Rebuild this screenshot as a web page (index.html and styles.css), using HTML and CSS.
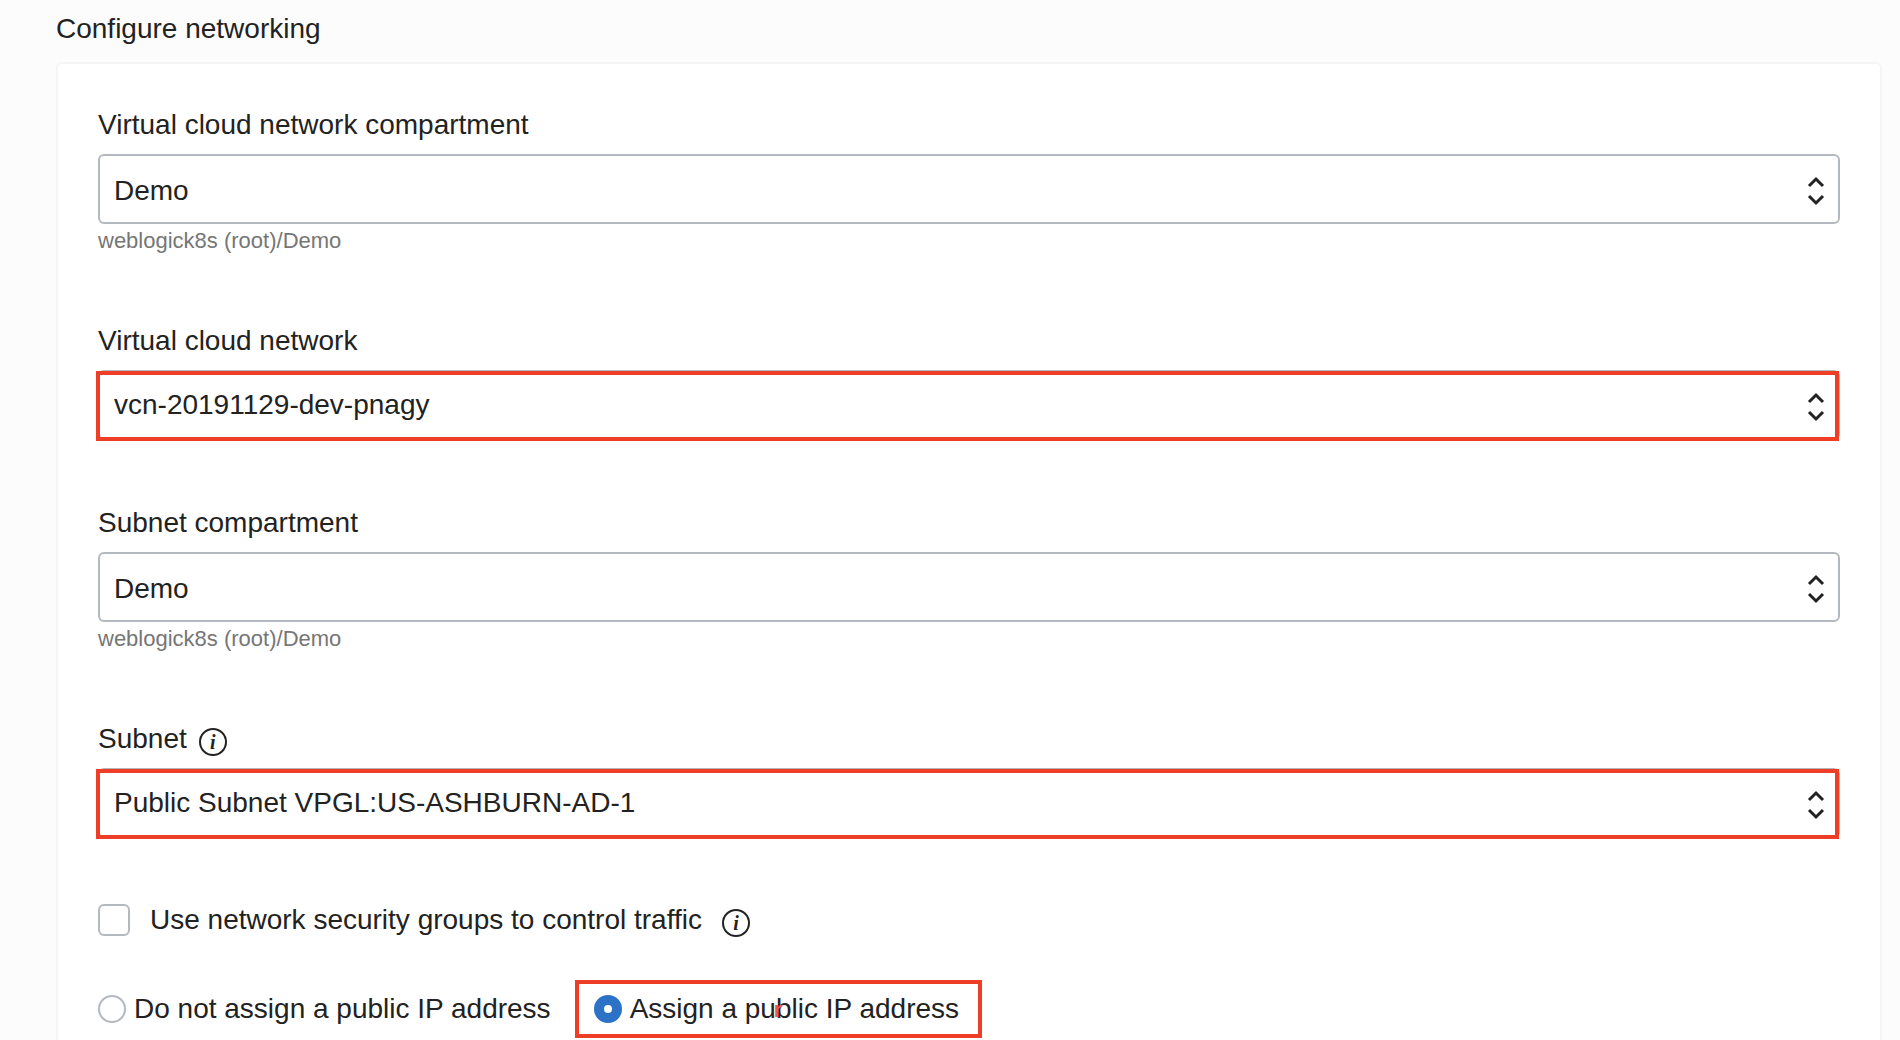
FILE: index.html
```html
<!DOCTYPE html>
<html lang="en">
<head>
<meta charset="utf-8">
<title>Configure networking</title>
<link rel="stylesheet" href="styles.css">
</head>
<body>
<h1 class="title">Configure networking</h1>
<form class="panel">
  <div class="field">
    <div class="label-row"><label for="vcn-compartment">Virtual cloud network compartment</label></div>
    <div class="select-box">
      <select id="vcn-compartment" class="select" aria-describedby="vcn-path"><option>Demo</option></select>
      <svg class="arrows" viewBox="0 0 18 30" aria-hidden="true"><path d="M2 10 9 3l7 7M2 20l7 7 7-7"/></svg>
    </div>
    <div class="hint" id="vcn-path">weblogick8s (root)/Demo</div>
  </div>
  <div class="field">
    <div class="label-row"><label for="vcn">Virtual cloud network</label></div>
    <div class="select-box marked">
      <select id="vcn" class="select raised"><option>vcn-20191129-dev-pnagy</option></select>
      <svg class="arrows" viewBox="0 0 18 30" aria-hidden="true"><path d="M2 10 9 3l7 7M2 20l7 7 7-7"/></svg>
    </div>
  </div>
  <div class="field">
    <div class="label-row"><label for="subnet-compartment">Subnet compartment</label></div>
    <div class="select-box">
      <select id="subnet-compartment" class="select" aria-describedby="subnet-path"><option>Demo</option></select>
      <svg class="arrows" viewBox="0 0 18 30" aria-hidden="true"><path d="M2 10 9 3l7 7M2 20l7 7 7-7"/></svg>
    </div>
    <div class="hint" id="subnet-path">weblogick8s (root)/Demo</div>
  </div>
  <div class="field">
    <div class="label-row"><label for="subnet">Subnet</label><button type="button" class="info">i</button></div>
    <div class="select-box marked">
      <select id="subnet" class="select raised"><option>Public Subnet VPGL:US-ASHBURN-AD-1</option></select>
      <svg class="arrows" viewBox="0 0 18 30" aria-hidden="true"><path d="M2 10 9 3l7 7M2 20l7 7 7-7"/></svg>
    </div>
  </div>
  <div class="check-row">
    <input type="checkbox" id="nsg" class="checkbox">
    <label for="nsg">Use network security groups to control traffic</label><button type="button" class="info">i</button>
  </div>
  <div class="radio-row">
    <label class="choice"><input type="radio" name="ip" class="radio"><span>Do not assign a public IP address</span></label>
    <label class="choice boxed"><input type="radio" name="ip" class="radio" checked><span>Assign a public IP address</span><span class="stray" aria-hidden="true">r</span></label>
  </div>
</form>
</body>
</html>
```
FILE: styles.css
```css
* {
  box-sizing: border-box;
}

body {
  display: flex;
  flex-direction: column;
  min-height: 100vh;
  margin: 0;
  padding: 11px 18px 0 56px;
  background: #fcfcfc;
  color: #222;
  font-family: "Liberation Sans", Arial, sans-serif;
  font-size: 28px;
  line-height: 36px;
}

.title {
  margin: 0 0 15px;
  font-size: 28px;
  font-weight: 400;
}

.panel {
  flex: 1;
  padding: 42px 40px 0;
  border: 2px solid #f5f5f5;
  border-bottom: 0;
  border-radius: 6px 6px 0 0;
  background: #fff;
}

.field {
  margin-bottom: 64px;
}

.label-row,
.check-row {
  display: flex;
  align-items: center;
}

.label-row {
  gap: 12px;
  padding-top: 1px;
  margin-bottom: 11px;
}

.select-box {
  position: relative;
}

.select {
  display: block;
  width: 100%;
  height: 70px;
  padding: 4px 50px 0 14px;
  border: 2px solid #b4b9bf;
  border-radius: 6px;
  background: #fff;
  color: #222;
  font: inherit;
  appearance: none;
}

.select.raised {
  padding-top: 0;
}

.arrows {
  position: absolute;
  top: 22px;
  right: 15px;
  width: 18px;
  height: 30px;
  fill: none;
  stroke: #222;
  stroke-width: 3;
  pointer-events: none;
}

/* Highlight frame drawn over the control */
.marked::after {
  content: "";
  position: absolute;
  inset: 1px 1px -1px -2px;
  border: 4px solid #ee3f26;
  pointer-events: none;
}

.hint {
  color: #767676;
  font-size: 22px;
  line-height: 34px;
}

.info {
  width: 28px;
  height: 28px;
  margin: 5px 0 0;
  padding: 0;
  border: 2px solid #222;
  border-radius: 50%;
  background: none;
  color: #222;
  font: italic 700 20px/22px "Liberation Serif", serif;
}

.check-row {
  gap: 20px;
  height: 36px;
  margin-bottom: 42px;
}

.checkbox {
  width: 32px;
  height: 32px;
  margin: 0;
  border: 2px solid #b4b9bf;
  border-radius: 6px;
  background: #fff;
  appearance: none;
}

.radio-row {
  display: flex;
  gap: 24px;
}

.choice {
  display: flex;
  align-items: center;
  gap: 8px;
  height: 58px;
}

.radio {
  width: 28px;
  height: 28px;
  margin: 0;
  border: 2px solid #b4b9bf;
  border-radius: 50%;
  background: #fff;
  appearance: none;
}

.radio:checked {
  border: 10px solid #2c72c7;
}

.boxed {
  position: relative;
  padding: 0 19px 0 15px;
  border: 4px solid #ee3f26;
}

.stray {
  position: absolute;
  top: 12px;
  left: 195px;
  color: #f0564a;
  font-size: 22px;
  font-weight: 700;
  line-height: 28px;
}
```
